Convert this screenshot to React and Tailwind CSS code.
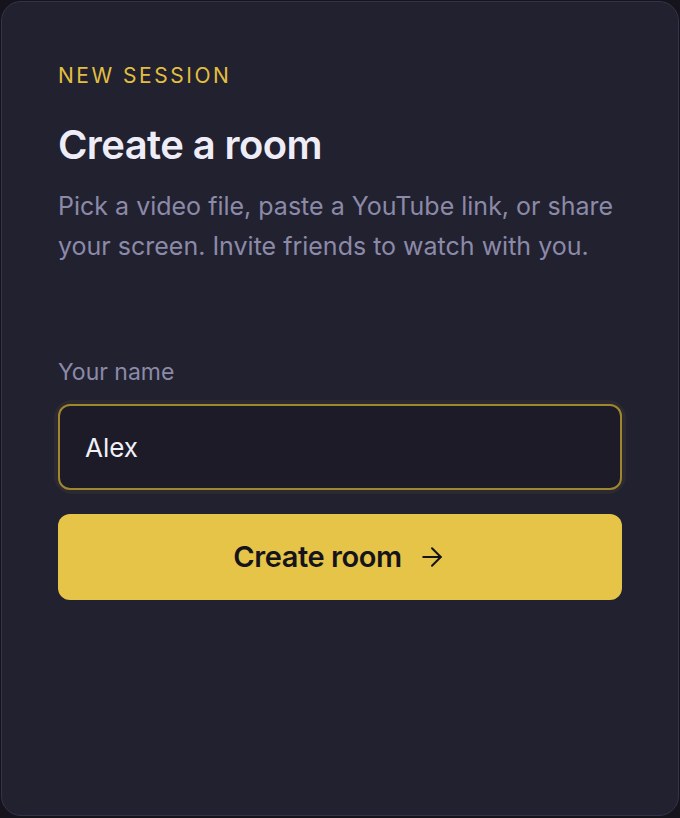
import { ArrowRight } from "lucide-react";

export default function App() {
  return (
    <div
      className="w-[680px] h-[818px] bg-[#15141c] p-px"
      style={{ fontFamily: "Inter, 'Noto Sans', sans-serif" }}
    >
      <div className="h-[815px] rounded-[20px] border border-[#34334a] bg-[#222130] px-[56px] pt-[60px]">
        <div className="text-[21px] leading-[28px] tracking-[0.12em] text-[#e3bf3f]">
          NEW SESSION
        </div>
        <h1 className="mt-[31px] text-[40px] leading-[48px] font-semibold tracking-[-0.015em] text-[#eeedf7]">
          Create a room
        </h1>
        <p className="mt-[17px] text-[25px] leading-[40px] text-[#8b8aa8]">
          Pick a video file, paste a YouTube link, or share your screen. Invite
          friends to watch with you.
        </p>

        <label className="mt-[92px] block text-[23px] leading-[28px] text-[#8b8aa8]">
          Your name
        </label>
        <div className="mt-[18px] rounded-[14px] ring-4 ring-[#2c2a30]">
          <input
            defaultValue="Alex"
            className="block w-full h-[86px] rounded-[12px] border-2 border-[#9e872e] bg-[#1c1b27] px-[25px] text-[26px] text-[#f1f0f8] outline-none"
          />
        </div>
        <button
          type="button"
          className="mt-[24px] flex w-full h-[86px] items-center justify-center gap-[15px] rounded-[12px] bg-[#e6c447] text-[29px] font-semibold tracking-[-0.015em] text-[#15141c]"
        >
          Create room
          <ArrowRight className="w-[30px] h-[30px]" strokeWidth={1.6} />
        </button>
      </div>
    </div>
  );
}
